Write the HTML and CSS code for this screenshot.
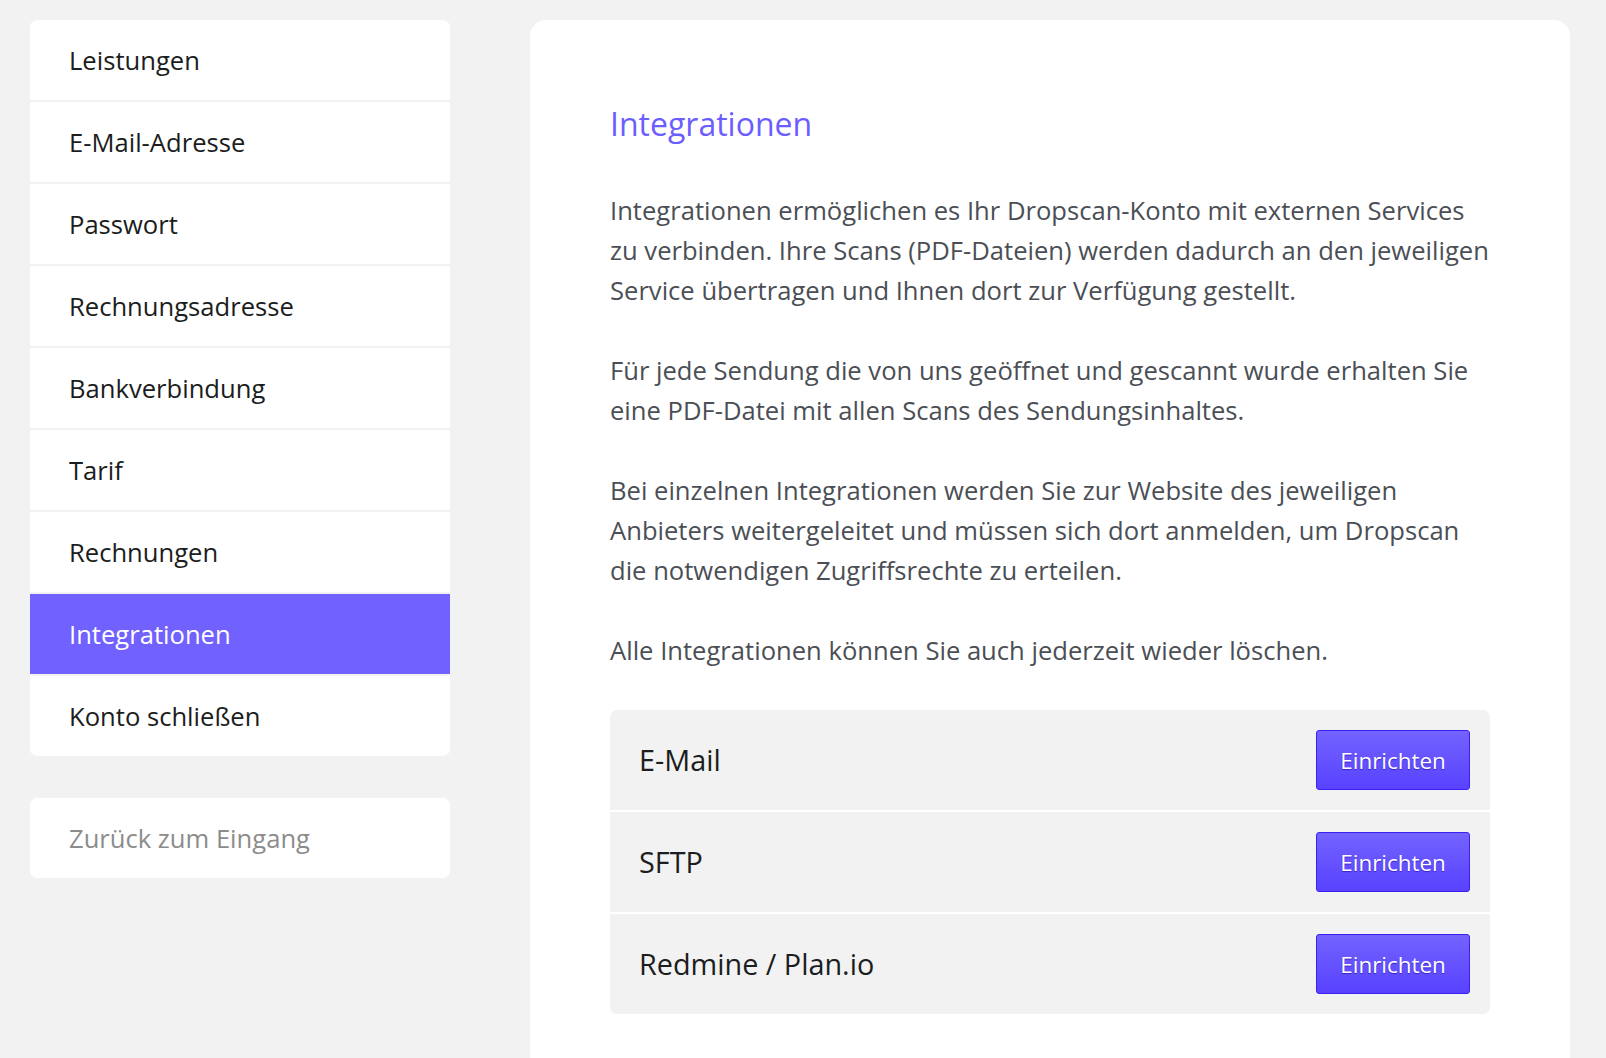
FILE: index.html
```html
<!DOCTYPE html>
<html lang="de">
  <head>
    <meta charset="UTF-8" />
    <meta name="viewport" content="width=device-width, initial-scale=1.0" />
    <title>Einstellungen – Integrationen</title>
    <link rel="stylesheet" href="styles.css">
  </head>

  <body>
    <div class="page">
      <!-- Sidebar -->
      <aside class="sidebar">
        <nav class="side-card side-nav">
          <a class="side-item" href="#">Leistungen</a>
          <a class="side-item" href="#">E-Mail-Adresse</a>
          <a class="side-item" href="#">Passwort</a>
          <a class="side-item" href="#">Rechnungsadresse</a>
          <a class="side-item" href="#">Bankverbindung</a>
          <a class="side-item" href="#">Tarif</a>
          <a class="side-item" href="#">Rechnungen</a>
          <a class="side-item active" href="#">Integrationen</a>
          <a class="side-item" href="#">Konto schließen</a>
        </nav>

        <div class="side-card">
          <a class="side-item back-link" href="#">Zurück zum Eingang</a>
        </div>
      </aside>

      <!-- Content -->
      <main class="content-card">
        <h1 class="title">Integrationen</h1>

        <p class="text">
          Integrationen ermöglichen es Ihr Dropscan-Konto mit externen Services
          zu verbinden. Ihre Scans (PDF-Dateien) werden dadurch an den jeweiligen
          Service übertragen und Ihnen dort zur Verfügung gestellt.
        </p>
        <p class="text">
          Für jede Sendung die von uns geöffnet und gescannt wurde erhalten Sie
          eine PDF-Datei mit allen Scans des Sendungsinhaltes.
        </p>
        <p class="text">
          Bei einzelnen Integrationen werden Sie zur Website des jeweiligen
          Anbieters weitergeleitet und müssen sich dort anmelden, um Dropscan
          die notwendigen Zugriffsrechte zu erteilen.
        </p>
        <p class="text">
          Alle Integrationen können Sie auch jederzeit wieder löschen.
        </p>

        <div class="integration-list">
          <div class="integration-row">
            <span class="integration-name">E-Mail</span>
            <button class="btn-setup">Einrichten</button>
          </div>
          <div class="integration-row">
            <span class="integration-name">SFTP</span>
            <button class="btn-setup">Einrichten</button>
          </div>
          <div class="integration-row">
            <span class="integration-name">Redmine / Plan.io</span>
            <button class="btn-setup">Einrichten</button>
          </div>
        </div>
      </main>
    </div>
  </body>
</html>
```

FILE: styles.css
```css
body,
html {
  margin: 0;
  padding: 0;
  background-color: #f2f2f2;
  font-family: "Open Sans", "Noto Sans", sans-serif;
}

.page {
  display: flex;
  align-items: flex-start;
  gap: 80px;
  padding: 20px 0 0 30px;
}

/* Sidebar */
.sidebar {
  width: 420px;
  flex-shrink: 0;
  display: flex;
  flex-direction: column;
  gap: 42px;
}

.side-card {
  background-color: #ffffff;
  border-radius: 7px;
  overflow: hidden;
}

.side-nav {
  display: flex;
  flex-direction: column;
  gap: 2px;
  background-color: #f2f2f2;
}

.side-item {
  display: flex;
  align-items: center;
  height: 80px;
  padding-left: 39px;
  background-color: #ffffff;
  color: #1b1d20;
  font-size: 25.6px;
  text-decoration: none;
}

.side-item.active {
  background-color: #7161ff;
  color: #ffffff;
}

.back-link {
  color: #8c8c8c;
}

/* Main content */
.content-card {
  width: 1040px;
  flex-shrink: 0;
  box-sizing: border-box;
  padding: 81px 80px 80px;
  background-color: #ffffff;
  border-radius: 16px;
}

.title {
  margin: 0 0 44px;
  font-size: 32px;
  font-weight: 400;
  line-height: 46px;
  color: #6c5dff;
}

.text {
  margin: 0 0 40px;
  font-size: 25.6px;
  line-height: 40px;
  color: #4b4f55;
}

.text:last-of-type {
  margin-bottom: 39px;
}

/* Integrations list */
.integration-list {
  display: flex;
  flex-direction: column;
  gap: 2px;
  border-radius: 7px;
  overflow: hidden;
}

.integration-row {
  display: flex;
  align-items: center;
  justify-content: space-between;
  height: 100px;
  padding: 0 20px 0 29px;
  background-color: #f2f2f2;
}

.integration-name {
  font-size: 28.8px;
  line-height: 40px;
  color: #1b1d20;
}

.btn-setup {
  width: 154px;
  height: 60px;
  padding: 0;
  border: 1px solid #3b1ff5;
  border-radius: 3px;
  background: linear-gradient(to bottom, #7363ff 0%, #5842ff 100%);
  color: #ffffff;
  font-family: "Open Sans", "Noto Sans", sans-serif;
  font-size: 22.4px;
  text-shadow: 0 1px 1px rgba(30, 10, 150, 0.6);
  cursor: pointer;
}
```
